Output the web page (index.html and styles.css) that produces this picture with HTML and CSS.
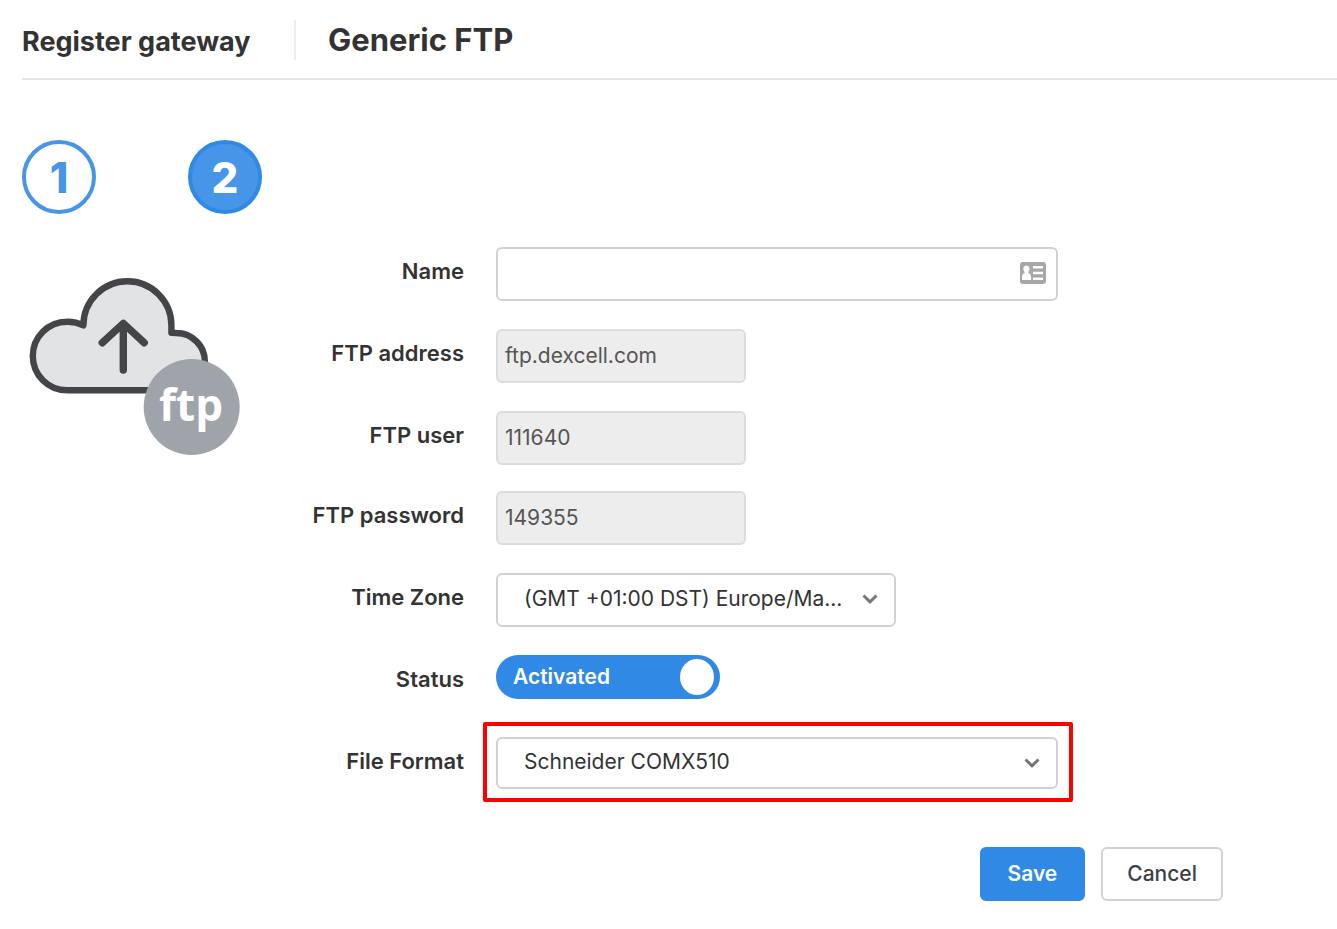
FILE: index.html
```html
<!DOCTYPE html>
<html lang="en">
<head>
<meta charset="utf-8">
<meta name="viewport" content="width=device-width, initial-scale=1">
<title>Register gateway</title>
<link rel="stylesheet" href="styles.css">
</head>
<body>
<div class="page">
  <header class="header">
    <p class="header-section">Register gateway</p>
    <h1 class="header-title">Generic FTP</h1>
  </header>
  <ol class="steps">
    <li class="step">1</li>
    <li class="step step-current" aria-current="step">2</li>
  </ol>
  <main class="content">
    <svg class="cloud" viewBox="12 8 222 190" role="img" aria-label="FTP upload">
      <path d="M57 130.2A34.2 34.2 0 0 1 57 61.8Q65.500 61.600 73.400 65.300A44 44 0 0 1 161.400 65.300V72.800Q164 72.800 166.300 73A28.600 28.600 0 0 1 166.300 130.2Z" fill="#e2e3e5" stroke="#434549" stroke-width="6.4" stroke-linejoin="round"/>
      <path d="M113.3 110V64M92.3 82.8L113.3 63.4L134.2 82.8" fill="none" stroke="#434549" stroke-width="7.4" stroke-linecap="round" stroke-linejoin="round"/>
      <circle cx="181.7" cy="147" r="48" fill="#9fa3aa"/>
      <text class="cloud-text" x="181" y="161" text-anchor="middle">ftp</text>
    </svg>
    <form class="form">
      <div class="group">
        <div class="row">
          <label class="label" for="name">Name</label>
          <div class="control">
            <input class="field" id="name" type="text">
            <svg class="card-icon" viewBox="0 0 26 22" aria-hidden="true">
              <rect width="26" height="22" rx="3" fill="#a7a7a7"/>
              <path fill="#fff" d="M6.4 3.5c2 0 3.2 1.4 3.2 3.3 0 1.300-.6 2.500-1.300 3.200v1c1.700.5 2.800 1.800 2.800 4v3H2v-3c0-2.200 1.100-3.500 2.600-4v-1c-.8-.7-1.300-1.900-1.300-3.200 0-1.900 1.200-3.300 3.100-3.300zM13 4h10v2.500H13zM13 9.700h10v2.500H13zM13 15.500h10V18H13z"/>
            </svg>
          </div>
        </div>
        <div class="row">
          <label class="label" for="address">FTP address</label>
          <div class="control control-short"><input class="field" id="address" type="text" value="ftp.dexcell.com" disabled></div>
        </div>
        <div class="row">
          <label class="label" for="user">FTP user</label>
          <div class="control control-short"><input class="field" id="user" type="text" value="111640" disabled></div>
        </div>
      </div>
      <div class="group">
        <div class="row">
          <label class="label" for="password">FTP password</label>
          <div class="control control-short"><input class="field" id="password" type="text" value="149355" disabled></div>
        </div>
        <div class="row">
          <label class="label" for="zone">Time Zone</label>
          <div class="control control-medium">
            <select class="field select" id="zone"><option>(GMT +01:00 DST) Europe/Ma...</option></select>
            <svg class="chevron" viewBox="0 0 16 10" aria-hidden="true"><path d="M1.500 1.500L8 7.800L14.500 1.500"/></svg>
          </div>
        </div>
        <div class="row">
          <label class="label" for="status">Status</label>
          <label class="toggle">Activated<input class="toggle-knob" id="status" type="checkbox" role="switch" checked></label>
        </div>
        <div class="row">
          <label class="label" for="format">File Format</label>
          <div class="control highlight">
            <select class="field select" id="format"><option>Schneider COMX510</option></select>
            <svg class="chevron" viewBox="0 0 16 10" aria-hidden="true"><path d="M1.500 1.500L8 7.800L14.500 1.500"/></svg>
          </div>
        </div>
      </div>
      <div class="actions">
        <button class="button button-primary" type="submit">Save</button>
        <button class="button" type="button">Cancel</button>
      </div>
    </form>
  </main>
</div>
</body>
</html>
```
FILE: styles.css
```css
* {
  box-sizing: border-box;
}

body {
  margin: 0;
  background: #fff;
  color: #333;
  font: 21px/28px Inter, "Liberation Sans", sans-serif;
}

.page {
  padding-left: 22px;
}

.header {
  display: flex;
  align-items: center;
  padding: 20px 0 18px;
  border-bottom: 2px solid #e6e6e6;
}

.header-section,
.header-title {
  margin: 0;
  line-height: 40px;
  font-weight: 700;
}

.header-section {
  width: 274px;
  height: 40px;
  padding-top: 2px;
  border-right: 2px solid #ececec;
  font-size: 27px;
}

.header-title {
  padding-left: 32px;
  font-size: 31px;
}

.steps {
  display: flex;
  gap: 92px;
  margin: 0;
  padding: 60px 0 33px;
  list-style: none;
}

.step {
  width: 74px;
  height: 74px;
  border: 4px solid #4795e8;
  border-radius: 50%;
  color: #4795e8;
  font-size: 42px;
  font-weight: 800;
  line-height: 68px;
  text-align: center;
}

.step-current {
  border-color: #2f89e5;
  background: #4795e8;
  color: #fff;
}

.content {
  display: flex;
  gap: 46px;
  padding-right: 114px;
}

.cloud {
  flex: none;
  width: 222px;
  height: 190px;
  margin-top: 21px;
}

.cloud-text {
  fill: #fff;
  font: 700 44px "Open Sans", "Noto Sans", sans-serif;
}

.form {
  flex: 1;
}

.group {
  display: grid;
  gap: 28px;
  margin-bottom: 26px;
}

.row {
  display: grid;
  grid-template-columns: 174px minmax(0, 1fr);
  column-gap: 32px;
  min-height: 54px;
}

.label {
  align-self: center;
  padding-bottom: 6px;
  font-size: 22px;
  font-weight: 600;
  text-align: right;
}

.control {
  position: relative;
  max-width: 562px;
}

.control-short {
  max-width: 250px;
}

.control-medium {
  max-width: 400px;
}

.field {
  display: block;
  width: 100%;
  height: 54px;
  padding: 0 7px 2px;
  border: 2px solid #ced3d8;
  border-radius: 6px;
  background: #fff;
  color: #333;
  font: inherit;
}

.field:disabled {
  border-color: #dcdcdc;
  background: #ededed;
  color: #555;
}

.select {
  padding: 0 40px 2px 26px;
  appearance: none;
}

.card-icon,
.chevron {
  position: absolute;
  top: 0;
  bottom: 2px;
  margin: auto 0;
  pointer-events: none;
}

.card-icon {
  right: 12px;
  width: 26px;
  height: 22px;
}

.chevron {
  right: 18px;
  width: 16px;
  height: 10px;
  fill: none;
  stroke: #777;
  stroke-width: 3px;
}

.toggle {
  display: flex;
  align-items: center;
  justify-content: space-between;
  width: 224px;
  height: 44px;
  padding: 0 6px 0 17px;
  border-radius: 22px;
  background: #2f89e5;
  color: #fff;
  font-weight: 600;
}

.toggle-knob {
  width: 34px;
  height: 36px;
  margin: 0;
  border-radius: 50%;
  background: #fff;
  appearance: none;
}

.highlight .field {
  height: 52px;
}

.highlight::after {
  position: absolute;
  inset: -15px -15px -11px -13px;
  border: 4px solid #f00;
  border-radius: 2px;
  content: "";
  pointer-events: none;
}

.actions {
  display: flex;
  gap: 16px;
  justify-content: flex-end;
  padding-top: 30px;
}

.button {
  height: 54px;
  padding: 0 24px;
  border: 2px solid #ced3d8;
  border-radius: 6px;
  background: #fff;
  color: #3d4045;
  font: inherit;
  font-weight: 500;
}

.button-primary {
  padding: 0 26px;
  border-color: #2f89e5;
  background: #2f89e5;
  color: #fff;
  font-weight: 600;
}
```
